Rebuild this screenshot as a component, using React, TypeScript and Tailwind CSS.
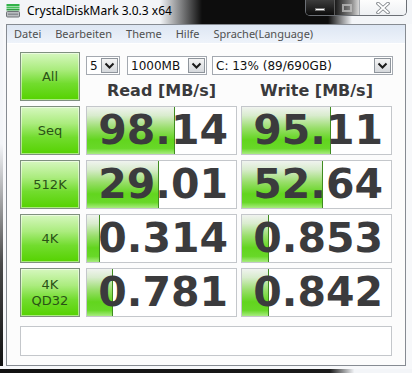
import React from 'react';

const rows = [
  { label: ['Seq'], read: '98.14', readW: 88, write: '95.11', writeW: 89 },
  { label: ['512K'], read: '29.01', readW: 72, write: '52.64', writeW: 81 },
  { label: ['4K'], read: '0.314', readW: 13, write: '0.853', writeW: 27 },
  { label: ['4K', 'QD32'], read: '0.781', readW: 26, write: '0.842', writeW: 27 },
];

function DiskIcon() {
  return (
    <svg width="14" height="14" viewBox="0 0 14 14" className="mt-[4px] ml-[6px] shrink-0">
      <rect x="0.5" y="0" width="13" height="2" fill="#33b24a" />
      <rect x="0.5" y="2.5" width="13" height="2" fill="#46c25a" />
      <rect x="0.5" y="5" width="13" height="1.5" fill="#2f9d41" />
      <rect x="0.5" y="7.5" width="13" height="5.5" rx="1" fill="#b9bcc0" stroke="#6e7277" strokeWidth="1" />
      <rect x="2" y="9.5" width="10" height="1.5" fill="#8a8e93" />
    </svg>
  );
}

function CaptionButtons() {
  return (
    <div className="ml-auto mr-[5px] flex h-[16px] rounded-b-[5px] border border-t-0 border-[#6b6f75] overflow-hidden">
      <div className="w-[28px] flex items-center justify-center bg-[linear-gradient(to_bottom,#3c3c3c,#0c0c0c)]">
        <div className="w-[10px] h-[3px] mt-[3px] bg-white border border-[#777]" />
      </div>
      <div className="w-[25px] flex items-center justify-center border-l border-[#5a5a5a] bg-[linear-gradient(to_right,#1a1a1a,#8c8c8c_70%,#d8d8d8)]">
        <div className="w-[10px] h-[8px] border-2 border-[#c8c8c8]/70" />
      </div>
      <div className="w-[47px] flex items-center justify-center border-l border-[#a9adb2] bg-[linear-gradient(to_bottom,#fdfdfd,#eef0f3)]">
        <svg width="16" height="12" viewBox="0 0 16 12">
          <path d="M3 1.5 L13 10.5 M13 1.5 L3 10.5" stroke="#7c8086" strokeWidth="3.6" strokeLinecap="round" />
          <path d="M3 1.5 L13 10.5 M13 1.5 L3 10.5" stroke="#ffffff" strokeWidth="1.8" strokeLinecap="round" />
        </svg>
      </div>
    </div>
  );
}

function SelectBox({ text, width }: { text: string; width: string }) {
  return (
    <div className={`${width} h-[19px] flex items-center border border-[#a4a9b0] bg-white`}>
      <span className="pl-[3px] text-[12px] leading-none text-[#111] font-['DejaVu_Sans',sans-serif] truncate">{text}</span>
      <div className="ml-auto mr-[1px] w-[17px] h-[15px] flex items-center justify-center border border-[#8f959c] bg-[linear-gradient(to_bottom,#f4f4f4,#d5d8dc)]">
        <svg width="11" height="8" viewBox="0 0 11 8">
          <path d="M1.5 1.5 L5.5 5.5 L9.5 1.5" stroke="#1a1a1a" strokeWidth="2" fill="none" />
        </svg>
      </div>
    </div>
  );
}

function LabelButton({ lines }: { lines: string[] }) {
  return (
    <div className="w-[60px] h-full shrink-0 border border-[#7f907f] shadow-[inset_0_0_0_1px_rgba(255,255,255,0.5)] bg-[linear-gradient(to_bottom,#d6f7bf_0%,#abec7e_35%,#72dc2e_65%,#55d200_100%)] flex flex-col items-center justify-center">
      {lines.map((l) => (
        <span key={l} className="text-[13px] leading-[16px] text-[#2a5216] font-['DejaVu_Sans',sans-serif]">
          {l}
        </span>
      ))}
    </div>
  );
}

function ResultBox({ value, fill }: { value: string; fill: number }) {
  return (
    <div className="relative w-[151px] h-full shrink-0 border border-[#c4c7cb] bg-white overflow-hidden">
      <div
        className="absolute left-0 top-0 bottom-0 border-r border-[#3f8c20] bg-[linear-gradient(to_bottom,#f0f3ef_0%,#d9ecce_18%,#98de6a_45%,#62d51e_70%,#68d828_88%,#a8ec80_100%)]"
        style={{ width: fill }}
      />
      <div className="relative h-full flex items-center justify-end pr-[8px]">
        <span className="text-[41px] leading-none font-bold text-[#3b3b3d] font-['DejaVu_Sans',sans-serif]">
          {value}
        </span>
      </div>
    </div>
  );
}

export default function App() {
  return (
    <div className="w-[412px] h-[373px] overflow-hidden flex flex-col bg-[#f3f5f8]">
      {/* title bar */}
      <div className="h-[24px] flex items-start bg-[linear-gradient(to_right,transparent_160px,#0d0d0d_202px,#0d0d0d_328px,transparent_352px)]">
        <DiskIcon />
        <span className="ml-[7px] mt-[3px] text-[12px] leading-[16px] text-black font-['Noto_Sans',sans-serif]">
          CrystalDiskMark 3.0.3 x64
        </span>
        <CaptionButtons />
      </div>

      <div className="flex h-[342px]">
        <div className="w-[6px] flex">
          <div className="w-[3px] bg-[linear-gradient(to_bottom,#f3f5f8_35%,#4a4a4a_70%,#111_100%)]" />
          <div className="w-[3px] bg-[#f7f8fa]" />
        </div>

        {/* client area */}
        <div className="w-[400px] border border-[#868b92] bg-[#fcfcfc] flex flex-col">
          <div className="h-[19px] flex items-center bg-[linear-gradient(to_bottom,#dde6f3,#eef3fa)] border-b border-white text-[11px] text-[#505050] font-['Noto_Sans',sans-serif]">
            <span className="px-[7px]">Datei</span>
            <span className="px-[7px]">Bearbeiten</span>
            <span className="px-[7px]">Theme</span>
            <span className="px-[7px]">Hilfe</span>
            <span className="px-[7px]">Sprache(Language)</span>
          </div>

          <div className="pl-[13px] pt-[8px] flex flex-col gap-[5px]">
            <div className="flex h-[49px]">
              <LabelButton lines={['All']} />
              <div className="ml-[6px] w-[307px] flex flex-col">
                <div className="mt-[4px] flex">
                  <SelectBox text="5" width="w-[34px]" />
                  <div className="ml-[7px]">
                    <SelectBox text="1000MB" width="w-[80px]" />
                  </div>
                  <div className="ml-[5px]">
                    <SelectBox text="C: 13% (89/690GB)" width="w-[181px]" />
                  </div>
                </div>
                <div className="mt-auto flex h-[20px] text-[16px] leading-[20px] font-bold text-[#3a3a3c] font-['DejaVu_Sans',sans-serif]">
                  <span className="w-[151px] text-center">Read [MB/s]</span>
                  <span className="ml-[4px] w-[151px] text-center">Write [MB/s]</span>
                </div>
              </div>
            </div>

            {rows.map((r) => (
              <div key={r.read} className="flex h-[49px]">
                <LabelButton lines={r.label} />
                <div className="ml-[6px] h-full">
                  <ResultBox value={r.read} fill={r.readW} />
                </div>
                <div className="ml-[4px] h-full">
                  <ResultBox value={r.write} fill={r.writeW} />
                </div>
              </div>
            ))}

            <div className="mt-[4px] w-[372px] h-[30px] border border-[#c4c7cb] bg-white" />
          </div>
        </div>

        <div className="w-[6px] bg-[#f7f8fa]" />
      </div>

      <div className="h-[7px] flex flex-col">
        <div className="h-[3px] bg-[#f7f8fa]" />
        <div className="h-[4px] bg-[linear-gradient(to_right,#111_0%,#1a1a1a_80%,transparent_86%)]" />
      </div>
    </div>
  );
}
